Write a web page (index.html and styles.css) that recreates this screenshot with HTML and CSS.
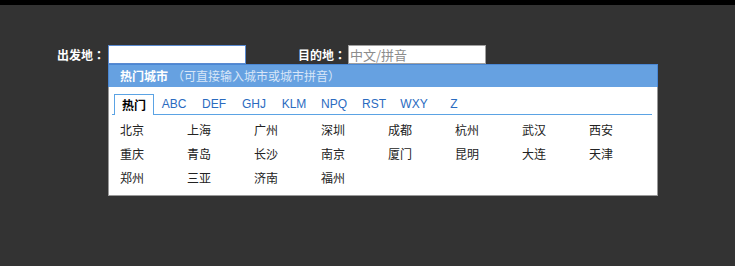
FILE: index.html
```html
<!DOCTYPE html>
<html lang="zh-CN">
<head>
  <meta charset="UTF-8">
  <title>城市选择</title>
  <link rel="stylesheet" href="styles.css">
</head>
<body>

<div class="search">
  <label class="search-label" for="from" lang="zh-TW">出发地：</label>
  <input type="text" id="from" class="city-input active">
  <label class="search-label to" for="to" lang="zh-TW">目的地：</label>
  <input type="text" id="to" class="city-input" placeholder="中文/拼音">

  <div class="city-panel">
    <div class="panel-head"><b>热门城市</b><span class="tip">（可直接输入城市或城市拼音）</span></div>
    <ul class="tabs">
      <li class="tab current">热门</li>
      <li class="tab">ABC</li>
      <li class="tab">DEF</li>
      <li class="tab">GHJ</li>
      <li class="tab">KLM</li>
      <li class="tab">NPQ</li>
      <li class="tab">RST</li>
      <li class="tab">WXY</li>
      <li class="tab">Z</li>
    </ul>
    <ul class="cities">
      <li>北京</li><li>上海</li><li>广州</li><li>深圳</li>
      <li>成都</li><li>杭州</li><li>武汉</li><li>西安</li>
      <li>重庆</li><li>青岛</li><li>长沙</li><li>南京</li>
      <li>厦门</li><li>昆明</li><li>大连</li><li>天津</li>
      <li>郑州</li><li>三亚</li><li>济南</li><li>福州</li>
    </ul>
  </div>
</div>

</body>
</html>
```

FILE: styles.css
```css
body {
  margin: 0;
  background-color: #333;
  border-top: 5px solid #000;
  font-family: "Liberation Sans", "Noto Sans CJK SC", sans-serif;
  font-size: 12px;
}

.search {
  display: grid;
  grid-template-columns: 51px 138px 102px 138px;
  align-items: center;
  padding: 40px 0 0 57px;
}

.search-label {
  color: #fff;
  font-weight: bold;
  font-family: "Noto Sans CJK TC", sans-serif;
  line-height: 19px;
}
.search-label.to {
  margin-left: 52px;
}

.city-input {
  display: block;
  box-sizing: border-box;
  width: 138px;
  height: 19px;
  margin: 0;
  padding: 0 1px;
  border: 1px solid #a0a0a0;
  background: #fff;
  font-family: "Noto Sans CJK SC", sans-serif;
  font-size: 13px;
  line-height: 17px;
  outline: none;
}
.city-input.active {
  border-color: #5a8ad0;
}
.city-input::placeholder {
  color: #8c8c8c;
}

.city-panel {
  grid-column: 2;
  justify-self: start;
  width: 550px;
  box-sizing: border-box;
  background: #fff;
  border: 1px solid #999;
  border-top: none;
}

.panel-head {
  margin: 0 -1px;
  height: 22px;
  line-height: 22px;
  padding-left: 11px;
  background: #66a1e1;
  border: 1px solid #4a87d4;
  border-bottom: none;
  color: #fff;
  font-family: "Noto Sans CJK SC", sans-serif;
}
.panel-head .tip {
  color: #d8e6f8;
  margin-left: 4px;
}

.tabs {
  display: flex;
  list-style: none;
  margin: 7px 5px 0 3px;
  padding: 0 0 0 2px;
  border-bottom: 1px solid #5ba3e4;
}
.tab {
  box-sizing: border-box;
  width: 40px;
  height: 21px;
  line-height: 19px;
  margin-bottom: -1px;
  text-align: center;
  color: #2a6bbf;
  border: 1px solid transparent;
  border-bottom: none;
}
.tab.current {
  background: #fff;
  border-color: #5ba3e4;
  color: #000;
  font-weight: bold;
  font-family: "Noto Sans CJK SC", sans-serif;
}

.cities {
  display: grid;
  grid-template-columns: repeat(8, 67px);
  list-style: none;
  margin: 0;
  padding: 3px 0 5px 11px;
}
.cities li {
  line-height: 24px;
  color: #222;
  font-family: "Noto Sans CJK SC", sans-serif;
}
```
